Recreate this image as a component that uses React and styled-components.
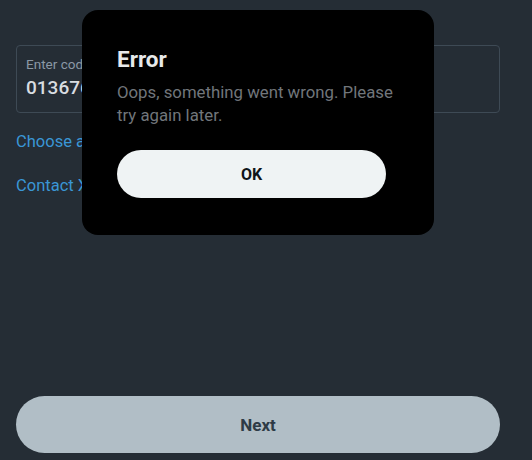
import React from "react";
import styled, { createGlobalStyle } from "styled-components";

const Global = createGlobalStyle`
  html, body { margin: 0; padding: 0; background: #252d35; }
  body { font-family: Roboto, "Noto Sans", sans-serif; }
  * { box-sizing: border-box; }
`;

const Page = styled.div`
  position: relative;
  width: 532px;
  height: 460px;
  background: #252d35;
  display: flex;
  flex-direction: column;
  padding: 45px 32px 7px 16px;
`;

const Field = styled.div`
  height: 68px;
  border: 1px solid #3e4a55;
  border-radius: 4px;
  padding: 9px 9px 0;
  display: flex;
  flex-direction: column;
`;

const Label = styled.span`
  font-size: 13.5px;
  color: #8b98a5;
  line-height: 18px;
`;

const Value = styled.span`
  font-size: 19px;
  font-weight: 500;
  color: #d9dde1;
  line-height: 24px;
  margin-top: 3px;
`;

const Link = styled.a`
  font-size: 16.5px;
  color: #3a96d6;
  line-height: 20px;
  margin-top: ${(p) => p.$mt}px;
  text-decoration: none;
`;

const Spacer = styled.div`
  flex: 1;
`;

const NextButton = styled.button`
  height: 57px;
  width: 484px;
  border: none;
  border-radius: 29px;
  background: #b1bec6;
  color: #2e3b45;
  font-family: inherit;
  font-size: 17px;
  font-weight: 700;
`;

const Modal = styled.div`
  position: absolute;
  left: 82px;
  top: 10px;
  width: 352px;
  height: 225px;
  background: #000;
  border-radius: 16px;
  padding: 37px 40px 0 35px;
  display: flex;
  flex-direction: column;
`;

const Title = styled.h1`
  margin: 0;
  font-size: 22.5px;
  font-weight: 700;
  color: #e7e9ea;
  line-height: 24px;
`;

const Message = styled.p`
  margin: 10px 0 0;
  font-size: 16.8px;
  line-height: 23px;
  color: #71767b;
`;

const OkButton = styled.button`
  margin-top: 23px;
  height: 48px;
  width: 269px;
  border: none;
  border-radius: 24px;
  background: #eff3f4;
  color: #0f1419;
  font-family: inherit;
  font-size: 16px;
  font-weight: 700;
`;

export default function App() {
  return (
    <>
      <Global />
      <Page>
        <Field>
          <Label>Enter code</Label>
          <Value>013676</Value>
        </Field>
        <Link $mt={19}>Choose a different method</Link>
        <Link $mt={24}>Contact X Support</Link>
        <Spacer />
        <NextButton>Next</NextButton>
        <Modal>
          <Title>Error</Title>
          <Message>Oops, something went wrong. Please try again later.</Message>
          <OkButton>OK</OkButton>
        </Modal>
      </Page>
    </>
  );
}
